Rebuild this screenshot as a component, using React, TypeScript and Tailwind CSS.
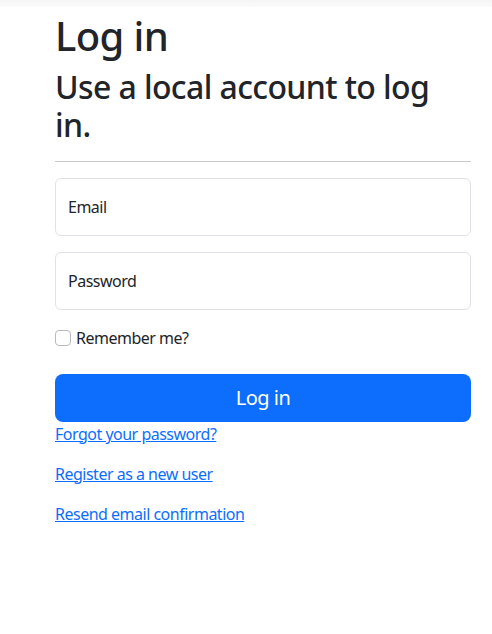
export default function App() {
  return (
    <div
      className="min-h-screen bg-white text-[#212529] tracking-[-0.5px]"
      style={{ fontFamily: '"Noto Sans", "Open Sans", sans-serif' }}
    >
      <div className="h-[7px] bg-gradient-to-b from-[#f5f5f5] to-[#fbfbfb]" />
      <main className="pl-[55px] pr-[21px] pt-[5px]">
        <h1 className="mb-2 text-[40px] leading-[48px] font-medium tracking-[-0.6px]">Log in</h1>
        <section>
          <form>
            <h2 className="text-[32px] leading-[38.4px] font-medium tracking-[-0.6px]">
              Use a local account to log in.
            </h2>
            <hr className="mt-4 mb-4 border-t border-[#c8c9ca]" />

            <div className="mb-4 flex h-[58px] items-center rounded-md border border-[#dee2e6] px-3">
              <label className="text-base">Email</label>
            </div>
            <div className="mb-4 flex h-[58px] items-center rounded-md border border-[#dee2e6] px-3">
              <label className="text-base">Password</label>
            </div>

            <div className="mb-6 flex h-6 items-center gap-[5px]">
              <span className="h-4 w-4 rounded border border-[#b8babd] bg-white" />
              <label className="text-base">Remember me?</label>
            </div>

            <button
              type="button"
              className="h-12 w-full rounded-lg bg-[#0d6efd] text-xl text-white"
            >
              Log in
            </button>

            <div className="text-base leading-6 text-[#0d6efd]">
              <p className="mb-4">
                <a href="#" className="underline">Forgot your password?</a>
              </p>
              <p className="mb-4">
                <a href="#" className="underline">Register as a new user</a>
              </p>
              <p className="mb-4">
                <a href="#" className="underline">Resend email confirmation</a>
              </p>
            </div>
          </form>
        </section>
      </main>
    </div>
  );
}
